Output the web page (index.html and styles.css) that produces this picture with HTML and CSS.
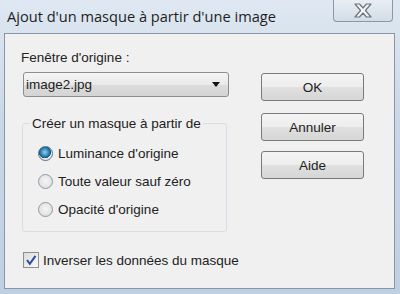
FILE: index.html
```html
<!DOCTYPE html>
<html>
<head>
    <title>Ajout d'un masque</title>
    <link rel="stylesheet" href="styles.css">
</head>
<body>
    <div class="window">
        <div class="titlebar">
            <span class="title">Ajout d'un masque à partir d'une image</span>
            <div class="close">
                <svg width="24" height="17" viewBox="0 0 24 17">
                    <path d="M4 2 L8.5 2 L12 6 L15.5 2 L20 2 L14.4 8.5 L20 15 L15.5 15 L12 11 L8.5 15 L4 15 L9.6 8.5 Z" fill="#f4f6f8" stroke="#6b7480" stroke-width="1.2" stroke-linejoin="round"/>
                </svg>
            </div>
        </div>
        <div class="client">
            <div class="left">
                <label class="field-label">Fenêtre d'origine :</label>
                <div class="select">
                    <span>image2.jpg</span>
                    <span class="arrow"></span>
                </div>
                <fieldset class="group">
                    <legend>Créer un masque à partir de</legend>
                    <div class="radio-row"><span class="radio checked"></span>Luminance d'origine</div>
                    <div class="radio-row"><span class="radio"></span>Toute valeur sauf zéro</div>
                    <div class="radio-row"><span class="radio"></span>Opacité d'origine</div>
                </fieldset>
                <div class="check-row">
                    <span class="checkbox">
                        <svg width="14" height="14" viewBox="0 0 14 14">
                            <path d="M3 7 L5.8 10.8 L11.5 2.8" fill="none" stroke="#2d4e9c" stroke-width="2"/>
                        </svg>
                    </span>
                    Inverser les données du masque
                </div>
            </div>
            <div class="right">
                <button class="btn">OK</button>
                <button class="btn">Annuler</button>
                <button class="btn last">Aide</button>
            </div>
        </div>
    </div>
</body>
</html>
```
FILE: styles.css
```css
html, body {
    margin: 0;
    padding: 0;
}
body {
    width: 400px;
    height: 294px;
    overflow: hidden;
    font-family: "Liberation Sans", Arial, sans-serif;
    color: #222;
}
.window {
    height: 294px;
    background: linear-gradient(180deg, #dfe8f2 0%, #c9d8e8 40%, #bfd0e3 100%);
    padding: 0 5px 0 4px;
    box-sizing: border-box;
}
.titlebar {
    height: 33px;
    display: flex;
    align-items: flex-start;
    justify-content: space-between;
}
.title {
    font-family: "Open Sans", "Liberation Sans", sans-serif;
    font-size: 14.6px;
    margin: 6px 0 0 3px;
    color: #1e1e1e;
}
.close {
    width: 58px;
    height: 21px;
    margin-right: 2px;
    border: 1px solid #8e98a4;
    border-top: none;
    border-radius: 0 0 4px 4px;
    background: linear-gradient(180deg, #e9eef4, #d3dce6);
    display: flex;
    align-items: center;
    justify-content: center;
}
.client {
    height: 256px;
    box-sizing: border-box;
    background: #f0f0f0;
    border: 1px solid #8a96a3;
    display: flex;
    padding: 0 0 0 16px;
    font-size: 13.5px;
}
.left {
    width: 210px;
    white-space: nowrap;
}
.field-label {
    display: block;
    margin-top: 16px;
    line-height: 16px;
}
.select {
    margin: 6px 0 0 2px;
    width: 206px;
    height: 25px;
    box-sizing: border-box;
    border: 1px solid #8d8d8d;
    border-radius: 3px;
    background: linear-gradient(180deg, #f5f5f5 0%, #e9e9e9 50%, #dcdcdc 51%, #d4d4d4 100%);
    display: flex;
    align-items: center;
    justify-content: space-between;
    padding: 0 8px 0 2px;
}
.arrow {
    width: 0;
    height: 0;
    border-left: 4px solid transparent;
    border-right: 4px solid transparent;
    border-top: 5px solid #111;
}
.group {
    margin: 19px 0 0 1px;
    width: 205px;
    height: 116px;
    box-sizing: border-box;
    border: 1px solid #d5dfe5;
    border-radius: 3px;
    padding: 8px 0 0 15px;
}
.group legend {
    padding: 0 2px 0 2px;
    margin-left: -8px;
}
.radio-row {
    display: flex;
    align-items: center;
    height: 28px;
}
.radio {
    width: 13px;
    height: 13px;
    border-radius: 50%;
    border: 1px solid #8e9aa4;
    background: radial-gradient(circle at 50% 45%, #f6f6f6, #d8d8d8);
    margin-right: 5px;
}
.radio.checked {
    background: radial-gradient(circle at 45% 40%, #8fd3f4 0%, #2a7fb0 40%, #1b4f76 55%, #f0f0f0 60%, #e0e0e0 100%);
    border-color: #4e6f88;
}
.check-row {
    display: flex;
    align-items: center;
    margin-top: 20px;
    margin-left: 2px;
}
.checkbox {
    width: 16px;
    height: 16px;
    box-sizing: border-box;
    border: 1px solid #8f8f8f;
    background: linear-gradient(135deg, #dcdcdc, #fafafa);
    display: flex;
    align-items: center;
    justify-content: center;
    margin-right: 4px;
}
.right {
    margin-left: 30px;
    padding-top: 39px;
    display: flex;
    flex-direction: column;
}
.btn {
    width: 103px;
    height: 28px;
    font-family: "Liberation Sans", Arial, sans-serif;
    font-size: 13.5px;
    color: #222;
    border: 1px solid #7a7a7a;
    border-radius: 3px;
    background: linear-gradient(180deg, #f4f4f4 0%, #ededed 50%, #e0e0e0 51%, #d6d6d6 100%);
    margin-bottom: 12px;
}
.btn.last {
    margin-top: -2px;
}
```
